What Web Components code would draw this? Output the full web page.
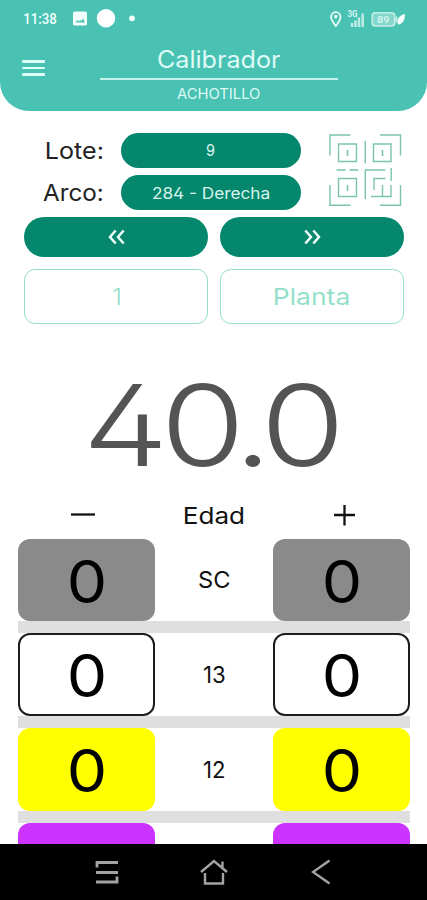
<!DOCTYPE html>
<html lang="es">
<head>
<meta charset="utf-8">
<title>Calibrador</title>
<style>
  html, body { margin: 0; height: 100%; background: #fff; overflow: hidden; }
  body { font-family: Inter, "Open Sans", sans-serif; }
</style>
</head>
<body>
<cal-app></cal-app>
<script>
const define = (name, html, setup) => {
  const template = document.createElement('template');
  template.innerHTML = html;
  customElements.define(name, class extends HTMLElement {
    connectedCallback() {
      if (this.shadowRoot) return;
      this.attachShadow({ mode: 'open' }).appendChild(template.content.cloneNode(true));
      if (setup) setup(this, this.shadowRoot);
    }
  });
};

/* A line of text sized by its visible width and its capital height. */
const pen = document.createElement('canvas').getContext('2d');
define('fit-text', `
<style>
  :host { display: block; flex: none; }
  svg { display: block; overflow: visible; }
  text { fill: currentColor; font-feature-settings: "cv02"; }
</style>
<svg><text></text></svg>`, (el, root) => {
  const num = (n, d) => parseFloat(el.getAttribute(n) || d);
  const w = num('w', 10), cap = num('cap', 10), weight = num('weight', 380);
  const family = el.getAttribute('font') || 'Inter';
  const value = el.getAttribute('text');
  const size = cap / (family === 'Roboto' ? 0.711 : 0.727);
  const spacing = num('spacing', 0) * size;
  pen.font = `${weight} ${size}px ${family}`;
  pen.letterSpacing = `${spacing}px`;
  const m = pen.measureText(value);
  const left = m.actualBoundingBoxLeft, ink = left + m.actualBoundingBoxRight;
  const svg = root.querySelector('svg'), text = root.querySelector('text');
  svg.setAttribute('width', w);
  svg.setAttribute('height', cap);
  text.textContent = value;
  text.setAttribute('font-family', `${family}, sans-serif`);
  text.setAttribute('font-size', size);
  text.setAttribute('font-weight', weight);
  text.setAttribute('letter-spacing', spacing);
  text.setAttribute('transform', `translate(${left * w / ink} ${cap}) scale(${w / ink} 1)`);
});

define('status-bar', `
<style>
  :host { display: flex; align-items: center; height: 37px; padding: 0 22px 0 24px; box-sizing: border-box; color: #effffb; }
  svg { display: block; flex: none; overflow: visible; }
  .sp { flex: 1; }
</style>
<fit-text text="11:38" w="33" cap="11" font="Roboto" weight="500"></fit-text>
<svg style="margin-left:15.5px" width="61" height="19" viewBox="0 0 61 19">
  <rect y="2.5" width="14" height="14" rx="1.5" fill="#f4fffd"/>
  <path d="M2.500 13.500l2-2.500 1.500 1.500 1-1.500 1 1 2-2.500 2 4z" fill="#49c2b4"/>
  <circle cx="33" cy="9.3" r="9.2" fill="#fff"/>
  <circle cx="59" cy="9.3" r="2.9" fill="#f4fffd"/>
</svg>
<span class="sp"></span>
<svg width="75" height="20" viewBox="330 8 75 20" fill="none">
  <path d="M335.8 25c-2.300-3-4.700-6-4.700-9a4.700 4.900 0 0 1 9.400 0c0 3-2.400 6-4.700 9z" stroke="#effffb" stroke-width="1.700"/>
  <path d="M334.300 14h3.400l-1 3.200h-2.400z" fill="#effffb"/>
  <text x="347.500" y="16" font-family="Roboto, sans-serif" font-size="8.500" font-weight="700" textLength="10" lengthAdjust="spacingAndGlyphs" fill="#d8f6f1">3G</text>
  <path d="M352 26v-4M355.500 26v-6.500M359 26v-9.500M362.700 26V12.500" stroke="#bdece5" stroke-width="2.500"/>
  <rect x="372.200" y="11.800" width="22.500" height="13" rx="3" fill="#83d6cb" stroke="#bdece5" stroke-width="1.800"/>
  <path d="M396.300 15.500v6" stroke="#bdece5" stroke-width="2.200"/>
  <text x="377" y="21.700" font-family="Roboto, sans-serif" font-size="9.500" font-weight="700" textLength="12.500" lengthAdjust="spacingAndGlyphs" fill="#d0f3ed">89</text>
  <path d="M398 23.500c-2-5 2-10 7-10.500 0 6-2 10-7 10.500z" fill="#f4fffd"/>
</svg>`);

define('app-header', `
<style>
  :host { display: block; height: 111px; background: #49c2b4; border-radius: 0 0 29px 29px; color: #dffaf5; }
  .bar { display: grid; grid-template-columns: 100px 238px 1fr; }
  .menu { display: flex; flex-direction: column; gap: 4px; padding: 23px 0 0 22px; }
  .menu i { width: 23px; height: 2.700px; border-radius: 1px; background: #dcfff8; }
  .title { display: flex; flex-direction: column; align-items: center; padding-top: 13.700px; }
  hr { width: 100%; height: 2px; margin: 10px 0 9.200px; border: 0; background: #c5f3ec; }
</style>
<status-bar></status-bar>
<div class="bar">
  <div class="menu"><i></i><i></i><i></i></div>
  <div class="title">
    <fit-text text="Calibrador" w="122.500" cap="17.300" weight="400"></fit-text>
    <hr>
    <fit-text text="ACHOTILLO" w="83.500" cap="10.400" weight="400"></fit-text>
  </div>
</div>`);

define('pill-button', `
<style>
  :host { display: flex; align-items: center; justify-content: center; background: #05876d; color: #d9f5ee; border-radius: 20px; }
</style><slot></slot>`);

define('outline-field', `
<style>
  :host { display: flex; align-items: center; justify-content: center; box-sizing: border-box; border: 1.300px solid #93dfcb; border-radius: 11px; color: #93dfcb; }
</style><slot></slot>`);

define('qr-icon', `
<style>:host { display: block; } svg { display: block; }</style>
<svg width="74" height="74" viewBox="328 133 74 74" fill="none" stroke="#7cc3b0" stroke-width="1.400">
  <path d="M330 155.500V135h20.500M380 135h20.500v20.500M330 185v20.300h20.500M380 205.300h20.500V185"/>
  <path d="M338.500 144h18v17.500h-18zM373.500 144h17.500v17.500h-17.500zM338.500 178.500h18v18h-18z"/>
  <path d="M347.500 150v6M382.500 150v6M347.500 185v6" stroke-width="1.600"/>
  <path d="M365.300 141v22.500M336.500 170h9M349.500 170h9M365.300 199v-29h20M391.200 168v13M374 190v-11.500h11.500M382.500 196.500V185M371 196.500h20V185"/>
</svg>`);

define('selector-panel', `
<style>
  :host { display: block; padding: 22px 23px 0 24px; color: #222; }
  .top { display: grid; grid-template-columns: 78px 180px 74px; grid-template-rows: 34.500px 34.500px; column-gap: 18.500px; row-gap: 7.500px; }
  .top > fit-text { justify-self: end; align-self: center; }
  qr-icon { grid-column: 3; grid-row: 1 / 3; margin-left: 9px; }
  .pair { display: grid; grid-template-columns: 184px 184px; column-gap: 12px; margin-top: 7.500px; }
  .nav > * { height: 40px; }
  .fields { margin-top: 12px; }
  .fields > * { height: 55px; }
  svg { display: block; }
</style>
<div class="top">
  <fit-text text="Lote:" w="55" cap="17"></fit-text>
  <pill-button><fit-text text="9" w="9" cap="11.700" weight="420"></fit-text></pill-button>
  <qr-icon></qr-icon>
  <fit-text text="Arco:" w="59" cap="17"></fit-text>
  <pill-button><fit-text text="284 - Derecha" w="116" cap="11.700" weight="420" style="padding-top:1px"></fit-text></pill-button>
</div>
<div class="pair nav">
  <pill-button><svg width="17" height="16" fill="none" stroke="#effffb" stroke-width="2.500"><path d="M7.700 1.500L2 8l5.700 6.500M15.700 1.500L10 8l5.700 6.500"/></svg></pill-button>
  <pill-button><svg width="17" height="16" fill="none" stroke="#effffb" stroke-width="2.500"><path d="M1.300 1.500L7 8l-5.700 6.500M9.300 1.500L15 8l-5.700 6.500"/></svg></pill-button>
</div>
<div class="pair fields">
  <outline-field><fit-text text="1" w="6.500" cap="17" weight="350"></fit-text></outline-field>
  <outline-field><fit-text text="Planta" w="74" cap="17"></fit-text></outline-field>
</div>`);

define('reading-panel', `
<style>
  :host { display: flex; flex-direction: column; align-items: center; padding-top: 59.500px; }
  .value { color: #545454; }
  .controls { display: grid; grid-template-columns: 1fr 60px 1fr; align-items: center; width: 284px; margin: 39px 2px 0 0; color: #111; }
  .controls svg { display: block; }
  .controls svg:last-child { justify-self: end; }
</style>
<fit-text class="value" text="40.0" w="246" cap="82" weight="290" spacing="-0.06"></fit-text>
<div class="controls">
  <svg width="25" height="20" stroke="#111" stroke-width="2.300"><path d="M0 9.500h24"/></svg>
  <fit-text text="Edad" w="58.500" cap="17" style="margin-left:2.500px"></fit-text>
  <svg width="21" height="21" stroke="#111" stroke-width="2.300"><path d="M0 10h21M10.500 0v20.500"/></svg>
</div>`);

define('count-card', `
<style>
  :host { display: flex; align-items: center; justify-content: center; height: 82.500px; box-sizing: border-box; border-radius: 12px; background: var(--fill, #fff); color: #000; padding: 2px 0 0 1px; }
  :host([outlined]) { border: 2px solid #1b1e20; }
</style>
<slot></slot>`);

define('count-row', `
<style>
  :host { display: block; height: 94.800px; }
  .row { display: grid; grid-template-columns: 136.700px 1fr 136.700px; align-items: center; }
  .label { display: flex; justify-content: center; color: #111; }
  .rule { height: 12.300px; background: #dfdfdf; }
</style>
<div class="row"></div>
<div class="rule"></div>`, (el, root) => {
  const at = n => el.getAttribute(n);
  const zero = at('label') ? '<fit-text text="0" w="34" cap="42.500" weight="370"></fit-text>' : '';
  const card = `<count-card ${el.hasAttribute('outlined') ? 'outlined' : ''} style="--fill:${at('fill')}">${zero}</count-card>`;
  const label = at('label') ? `<fit-text text="${at('label')}" w="${at('w')}" cap="16.800"></fit-text>` : '';
  root.querySelector('.row').innerHTML = `${card}<div class="label">${label}</div>${card}`;
});

define('count-list', `
<style>
  :host { display: block; margin: 0 17px 0 18px; }
</style>
<count-row label="SC" w="30.500" fill="#8a8a8a"></count-row>
<count-row label="13" w="20.500" fill="#fff" outlined></count-row>
<count-row label="12" w="20.500" fill="#ffff00"></count-row>
<count-row fill="#cc33ff"></count-row>`);

define('system-nav', `
<style>
  :host { display: grid; grid-template-columns: repeat(3, 107px); justify-content: center; align-items: center; justify-items: center; height: 56px; flex: none; background: #000; }
  svg { display: block; }
</style>
<svg width="24" height="24" fill="none" stroke="#a3a3a3" stroke-width="2.800"><path d="M2 7.500V2.500h21M1 12.500h22M1 22h21v-5.500"/></svg>
<svg width="28" height="26" fill="none" stroke="#a3a3a3" stroke-width="2.400"><path d="M1 13L14 2l13 11M5 14v10.500h18V14M22.500 2.500v6"/></svg>
<svg width="20" height="26" fill="none" stroke="#a3a3a3" stroke-width="2.400"><path d="M18.500 1.500L2 13l16.500 11.500"/></svg>`);

define('cal-app', `
<style>
  :host { display: flex; flex-direction: column; width: 427px; height: 900px; background: #fff; }
  main { flex: 1; min-height: 0; overflow: hidden; }
  count-list { margin-top: 13px; }
</style>
<main>
  <app-header></app-header>
  <selector-panel></selector-panel>
  <reading-panel></reading-panel>
  <count-list></count-list>
</main>
<system-nav></system-nav>`);
</script>
</body>
</html>
